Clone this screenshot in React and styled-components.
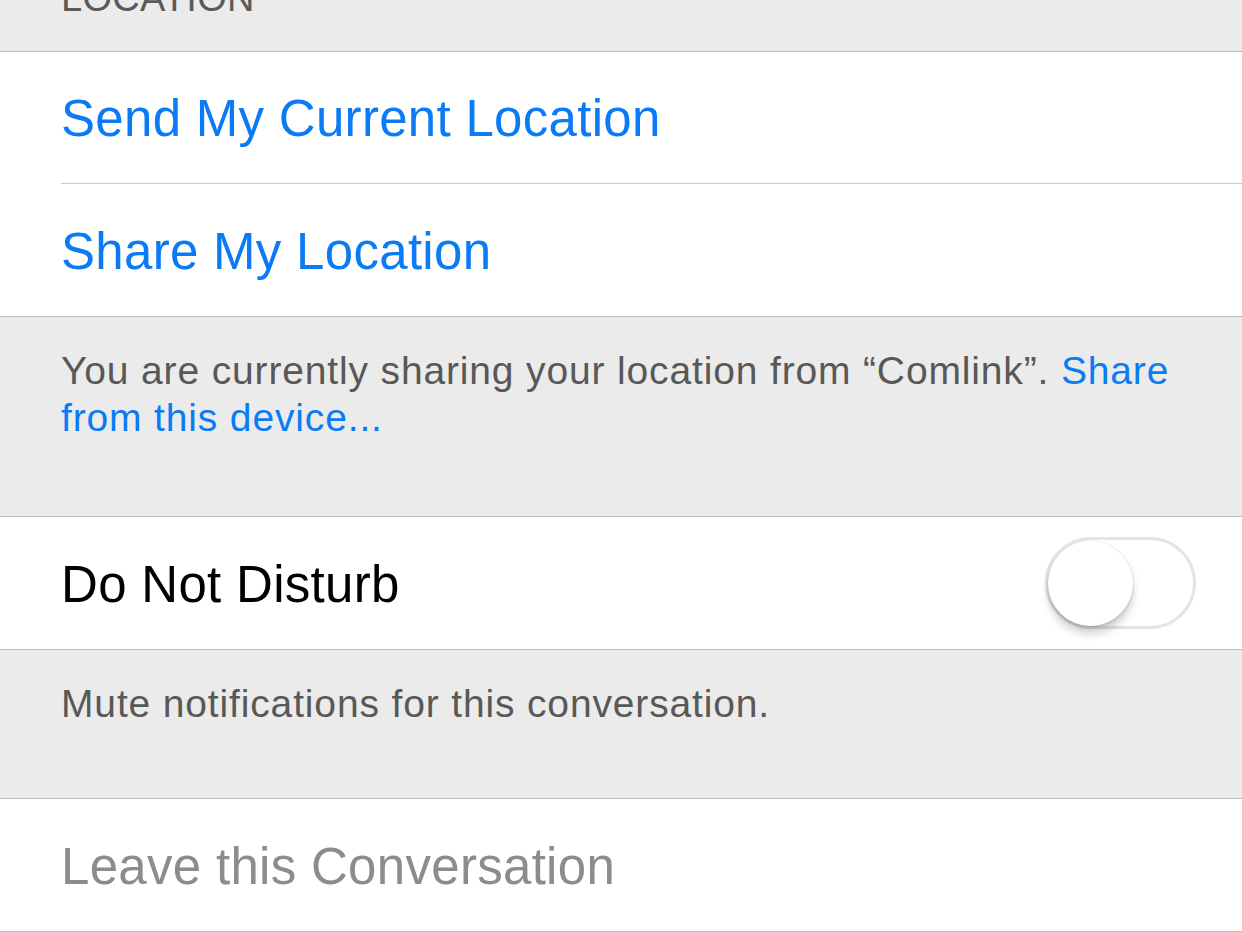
import React from "react"
import styled, { createGlobalStyle } from "styled-components"

const GlobalStyle = createGlobalStyle`
  html, body {
    margin: 0;
    padding: 0;
    background: #ebebeb;
  }
  body {
    font-family: "Liberation Sans", Arial, Helvetica, sans-serif;
    -webkit-font-smoothing: antialiased;
  }
`

const Page = styled.div`
  width: 1242px;
  height: 932px;
  overflow: hidden;
  background: #ebebeb;
`

const SectionHeader = styled.div`
  height: 51px;
  padding-left: 61px;
  overflow: hidden;
  color: #5a5a5a;
  font-size: 38px;
  line-height: 47px;
  letter-spacing: 0.3px;
  text-transform: uppercase;
`

const HeaderLabel = styled.div`
  margin-top: -25px;
`

const Group = styled.div`
  background: #ffffff;
  border-top: 1px solid #bdbdbd;
  border-bottom: 1px solid #bdbdbd;
`

const Row = styled.div`
  height: 132px;
  padding-left: 61px;
  box-sizing: border-box;
  display: flex;
`

const RowContent = styled.div`
  flex: 1;
  display: flex;
  align-items: center;
  justify-content: space-between;
  padding-right: 46px;
  border-bottom: ${p => (p.$separator ? "1px solid #c9c9c9" : "none")};
`

const RowLabel = styled.span`
  padding-top: 2px;
  font-size: 51px;
  letter-spacing: 0.3px;
  color: ${p =>
    p.$tone === "action" ? "#0a7bf5" : p.$tone === "muted" ? "#8c8c8c" : "#000000"};
`

const Footer = styled.div`
  height: ${p => p.$height}px;
  box-sizing: border-box;
  padding: 30px 60px 0 61px;
  color: #585858;
  font-size: 39px;
  line-height: 47px;
  letter-spacing: 0.85px;
`

const FooterLink = styled.span`
  color: #0a7bf5;
`

const Switch = styled.div`
  width: 151px;
  height: 92px;
  box-sizing: border-box;
  border: 3px solid #e4e4e4;
  border-radius: 46px;
  background: #ffffff;
  display: flex;
  align-items: center;
`

const Knob = styled.div`
  width: 85px;
  height: 85px;
  border-radius: 50%;
  background: #ffffff;
  box-shadow: 0 8px 8px rgba(0, 0, 0, 0.18), 0 2px 3px rgba(0, 0, 0, 0.08),
    0 0 0 1px rgba(0, 0, 0, 0.05);
`

const App = () => (
  <>
    <GlobalStyle />
    <Page>
      <SectionHeader>
        <HeaderLabel>Location</HeaderLabel>
      </SectionHeader>
      <Group>
        <Row>
          <RowContent $separator>
            <RowLabel $tone="action">Send My Current Location</RowLabel>
          </RowContent>
        </Row>
        <Row>
          <RowContent>
            <RowLabel $tone="action">Share My Location</RowLabel>
          </RowContent>
        </Row>
      </Group>
      <Footer $height={199}>
        You are currently sharing your location from “Comlink”.{" "}
        <FooterLink>Share from this device...</FooterLink>
      </Footer>
      <Group>
        <Row>
          <RowContent>
            <RowLabel>Do Not Disturb</RowLabel>
            <Switch>
              <Knob />
            </Switch>
          </RowContent>
        </Row>
      </Group>
      <Footer $height={148}>Mute notifications for this conversation.</Footer>
      <Group>
        <Row>
          <RowContent>
            <RowLabel $tone="muted">Leave this Conversation</RowLabel>
          </RowContent>
        </Row>
      </Group>
    </Page>
  </>
)

export default App
